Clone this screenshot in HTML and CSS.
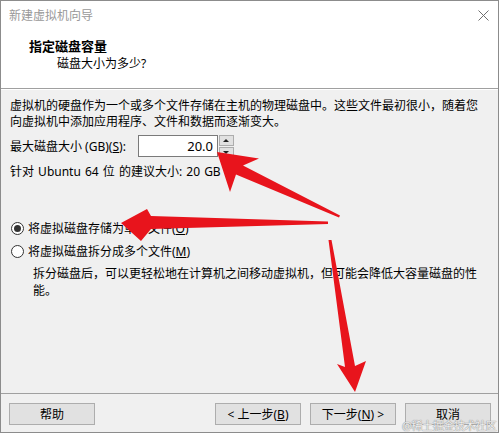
FILE: index.html
```html
<!DOCTYPE html>
<html lang="zh-CN">

<head>
  <meta charset="utf-8">
  <title>新建虚拟机向导</title>
  <link rel="stylesheet" href="styles.css">
</head>

<body>
  <div class="window">
    <div class="titlebar">
      <span class="title">新建虚拟机向导</span>
      <svg class="close" width="11" height="11" viewBox="0 0 11 11">
        <path d="M0.5 0.5 L10.5 10.5 M10.5 0.5 L0.5 10.5" stroke="#6f6f6f" stroke-width="1" fill="none" />
      </svg>
    </div>

    <div class="header">
      <div class="heading">指定磁盘容量</div>
      <div class="subheading">磁盘大小为多少?</div>
    </div>

    <div class="content">
      <p class="intro">虚拟机的硬盘作为一个或多个文件存储在主机的物理磁盘中。这些文件最初很小，随着您<br>向虚拟机中添加应用程序、文件和数据而逐渐变大。</p>

      <div class="size-row">
        <label>最大磁盘大小 (GB)(<u>S</u>):</label>
        <div class="spin">
          <div class="spin-input">20.0</div>
          <div class="spin-buttons">
            <span class="spin-btn up"></span>
            <span class="spin-btn down"></span>
          </div>
        </div>
      </div>

      <p class="recommend">针对 Ubuntu 64 位 的建议大小: 20 GB</p>

      <div class="options">
        <div class="radio-row"><span class="radio checked"></span>将虚拟磁盘存储为单个文件(<u>O</u>)</div>
        <div class="radio-row"><span class="radio"></span>将虚拟磁盘拆分成多个文件(<u>M</u>)</div>
        <p class="note">拆分磁盘后，可以更轻松地在计算机之间移动虚拟机，但可能会降低大容量磁盘的性<br>能。</p>
      </div>
    </div>

    <div class="footer">
      <button class="btn" type="button">帮助</button>
      <div class="nav">
        <button class="btn" type="button">&lt; 上一步(<u>B</u>)</button>
        <button class="btn" type="button">下一步(<u>N</u>) &gt;</button>
        <button class="btn" type="button">取消</button>
      </div>
    </div>

    <span class="watermark">@稀土掘金技术社区</span>

    <svg class="arrows" width="499" height="433" viewBox="0 0 499 433">
      <polygon points="340,215.5 243,165.5 259,158.5 217,152 230,192 236,174.5 339,217.5" />
      <polygon points="328,221.5 151,216 147,209 121,223 141,241 151,229 328,224" />
      <polygon points="328.5,240 345,367 337,364 355,392 366,361 355,366 331.5,240" />
    </svg>
  </div>
</body>

</html>
```

FILE: styles.css
```css
* {
  box-sizing: border-box;
}

body {
  margin: 0;
  font-family: "Noto Sans", "Noto Sans CJK SC", "Microsoft YaHei", sans-serif;
  font-size: 12px;
  color: #000;
}

p {
  margin: 0;
}

.window {
  position: relative;
  width: 499px;
  height: 433px;
  border: 1px solid #8c8c8c;
  background-color: #f0f0f0;
  display: flex;
  flex-direction: column;
}

.titlebar {
  height: 29px;
  background-color: #fff;
  display: flex;
  align-items: center;
  justify-content: space-between;
  padding: 0 9px 0 8px;
}

.title {
  color: #999;
  line-height: 29px;
}

.header {
  background-color: #fff;
  padding: 8px 0 16px 28px;
  border-bottom: 1px solid #a0a0a0;
}

.heading {
  font-weight: bold;
  font-size: 13px;
  line-height: 17px;
}

.subheading {
  padding-left: 28px;
  line-height: 17px;
}

.content {
  flex: 1;
  border-top: 1px solid #fff;
  padding: 8px 9px 0;
}

.intro {
  line-height: 16px;
}

.size-row {
  display: flex;
  align-items: center;
  gap: 6px;
  margin-top: 5px;
  height: 22px;
}

.size-row label {
  width: 122px;
}

.spin {
  display: flex;
  height: 22px;
}

.spin-input {
  width: 80px;
  height: 22px;
  background-color: #fff;
  border: 1px solid #7a7a7a;
  text-align: right;
  padding-right: 4px;
  font-size: 13px;
  line-height: 20px;
}

.spin-buttons {
  width: 15px;
  display: flex;
  flex-direction: column;
  gap: 1px;
  margin-left: 1px;
}

.spin-btn {
  flex: 1;
  border: 1px solid #adadad;
  background-color: #e1e1e1;
  position: relative;
}

.spin-btn::after {
  content: "";
  position: absolute;
  left: 3px;
  border-left: 3px solid transparent;
  border-right: 3px solid transparent;
}

.up::after {
  top: 3px;
  border-bottom: 3px solid #222;
}

.down::after {
  top: 3px;
  border-top: 3px solid #222;
}

.recommend {
  margin-top: 7px;
  line-height: 16px;
  word-spacing: 1px;
}

.options {
  margin-top: 39px;
}

.radio-row {
  display: flex;
  align-items: center;
  height: 18px;
  margin-bottom: 5px;
}

.radio {
  width: 13px;
  height: 13px;
  border: 1px solid #333;
  border-radius: 50%;
  background-color: #fff;
  margin: 0 4px 0 1px;
  position: relative;
}

.radio.checked::after {
  content: "";
  position: absolute;
  left: 2px;
  top: 2px;
  width: 7px;
  height: 7px;
  border-radius: 50%;
  background-color: #333;
}

.note {
  padding-left: 23px;
  line-height: 17px;
}

.footer {
  border-top: 1px solid #a0a0a0;
  padding: 9px 7px 7px 8px;
  display: flex;
  justify-content: space-between;
}

.nav {
  display: flex;
  gap: 9px;
}

.btn {
  width: 86px;
  height: 22px;
  padding: 0;
  border: 1px solid #adadad;
  background-color: #e1e1e1;
  font-family: inherit;
  font-size: 12px;
  color: #000;
}

.watermark {
  position: absolute;
  left: 401px;
  top: 416px;
  font-size: 11px;
  letter-spacing: -0.4px;
  color: rgba(255, 255, 255, 0.85);
  text-shadow: 0 0 1px #8a8a8a, 0 0 1px #8a8a8a;
}

.arrows {
  position: absolute;
  left: -1px;
  top: -1px;
  pointer-events: none;
}

.arrows polygon {
  fill: #e8141c;
}
```
